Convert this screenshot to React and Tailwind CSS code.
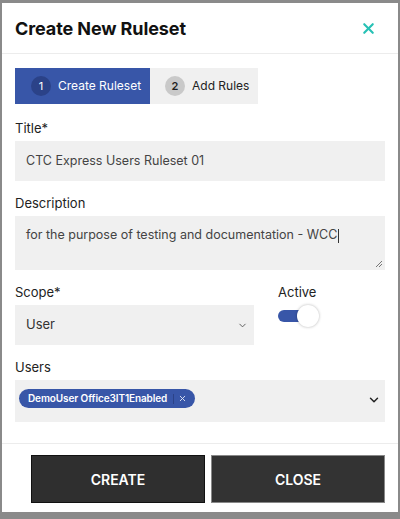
import React from 'react';
import { X, ChevronDown } from 'lucide-react';

const font = { fontFamily: 'Inter, "Open Sans", sans-serif' };

const Label = ({ children, className = '' }) => (
  <div className={`text-[13px] leading-[16px] text-[#222] mb-[5px] ${className}`}>{children}</div>
);

export default function App() {
  return (
    <div className="w-[400px] h-[519px] bg-[#8a8a8a] pt-[3px] px-[2px] overflow-hidden" style={font}>
      <div className="bg-white h-[509px] flex flex-col">
        {/* Header */}
        <div className="flex items-center justify-between h-[51px] px-[13px] border-b border-[#ececec]">
          <h2 className="text-[18px] font-bold text-[#111] tracking-[-0.1px]">Create New Ruleset</h2>
          <X className="w-[17px] h-[17px] text-[#27c1b5] mr-[8px]" strokeWidth={3} />
        </div>

        <div className="px-[13px] pt-[14px] flex-1">
          {/* Stepper */}
          <div className="flex h-[36px]">
            <div className="w-[135px] bg-[#3856a8] flex items-center pl-[16px] gap-[7px]">
              <span className="w-[20px] h-[20px] rounded-full bg-[#2b4288] text-white text-[11px] flex items-center justify-center">1</span>
              <span className="text-white text-[12px]">Create Ruleset</span>
            </div>
            <div className="w-[108px] bg-[#f0f0f0] flex items-center pl-[15px] gap-[7px]">
              <span className="w-[20px] h-[20px] rounded-full bg-[#c9c9c9] text-[#222] text-[11px] font-semibold flex items-center justify-center">2</span>
              <span className="text-[#222] text-[12px]">Add Rules</span>
            </div>
          </div>

          {/* Title */}
          <Label className="mt-[16px]">Title*</Label>
          <div className="h-[40px] bg-[#f0f0f0] flex items-center pl-[11px] text-[12.5px] text-[#444]">
            CTC Express Users Ruleset 01
          </div>

          {/* Description */}
          <Label className="mt-[14px]">Description</Label>
          <div className="relative h-[54px] bg-[#f0f0f0] pl-[11px] pt-[11px] text-[12.5px] leading-[16px] text-[#444]">
            for the purpose of testing and documentation - WCC<span className="inline-block w-[1px] h-[14px] bg-[#333] align-middle ml-[1px]"></span>
            <svg className="absolute right-[2px] bottom-[2px]" width="9" height="9" viewBox="0 0 9 9">
              <path d="M8 2 L2 8 M8 5 L5 8" stroke="#777" strokeWidth="1" />
            </svg>
          </div>

          {/* Scope / Active */}
          <div className="flex mt-[14px] gap-[24px]">
            <div className="w-[239px]">
              <Label>Scope*</Label>
              <div className="h-[40px] bg-[#f0f0f0] flex items-center justify-between pl-[11px] pr-[6px] text-[13px] text-[#333]">
                <span>User</span>
                <ChevronDown className="w-[11px] h-[11px] text-[#555]" strokeWidth={2} />
              </div>
            </div>
            <div>
              <Label>Active</Label>
              <div className="relative w-[42px] h-[22px] flex items-center">
                <div className="w-[30px] h-[12px] rounded-full bg-[#3856a8]"></div>
                <div className="absolute left-[19px] top-[0px] w-[22px] h-[22px] rounded-full bg-white shadow-[0_0_3px_rgba(0,0,0,0.3)]"></div>
              </div>
            </div>
          </div>

          {/* Users */}
          <Label className="mt-[14px]">Users</Label>
          <div className="h-[42px] bg-[#f0f0f0] flex items-start justify-between pt-[9px] pl-[4px] pr-[4px]">
            <span className="h-[19px] rounded-full bg-[#3856a8] text-white text-[10px] font-semibold tracking-[-0.1px] flex items-center pl-[9px] pr-[8px]">
              DemoUser Office3IT1Enabled
              <span className="w-[1px] h-[10px] bg-[#2b4288] ml-[6px] mr-[4px]"></span>
              <X className="w-[9px] h-[9px] text-[#dfe4f3]" strokeWidth={2.5} />
            </span>
            <ChevronDown className="w-[14px] h-[14px] text-[#222] mt-[4px]" strokeWidth={2.5} />
          </div>
        </div>

        {/* Footer */}
        <div className="border-t border-[#ececec] h-[69px] flex items-start pt-[11px] pl-[29px] pr-[13px] gap-[6px]">
          <button className="w-[174px] h-[48px] bg-[#2f2f2f] border border-[#111] text-white text-[14px] font-semibold">CREATE</button>
          <button className="w-[174px] h-[48px] bg-[#333] border border-[#888] text-white text-[14px] font-semibold">CLOSE</button>
        </div>
      </div>
    </div>
  );
}
